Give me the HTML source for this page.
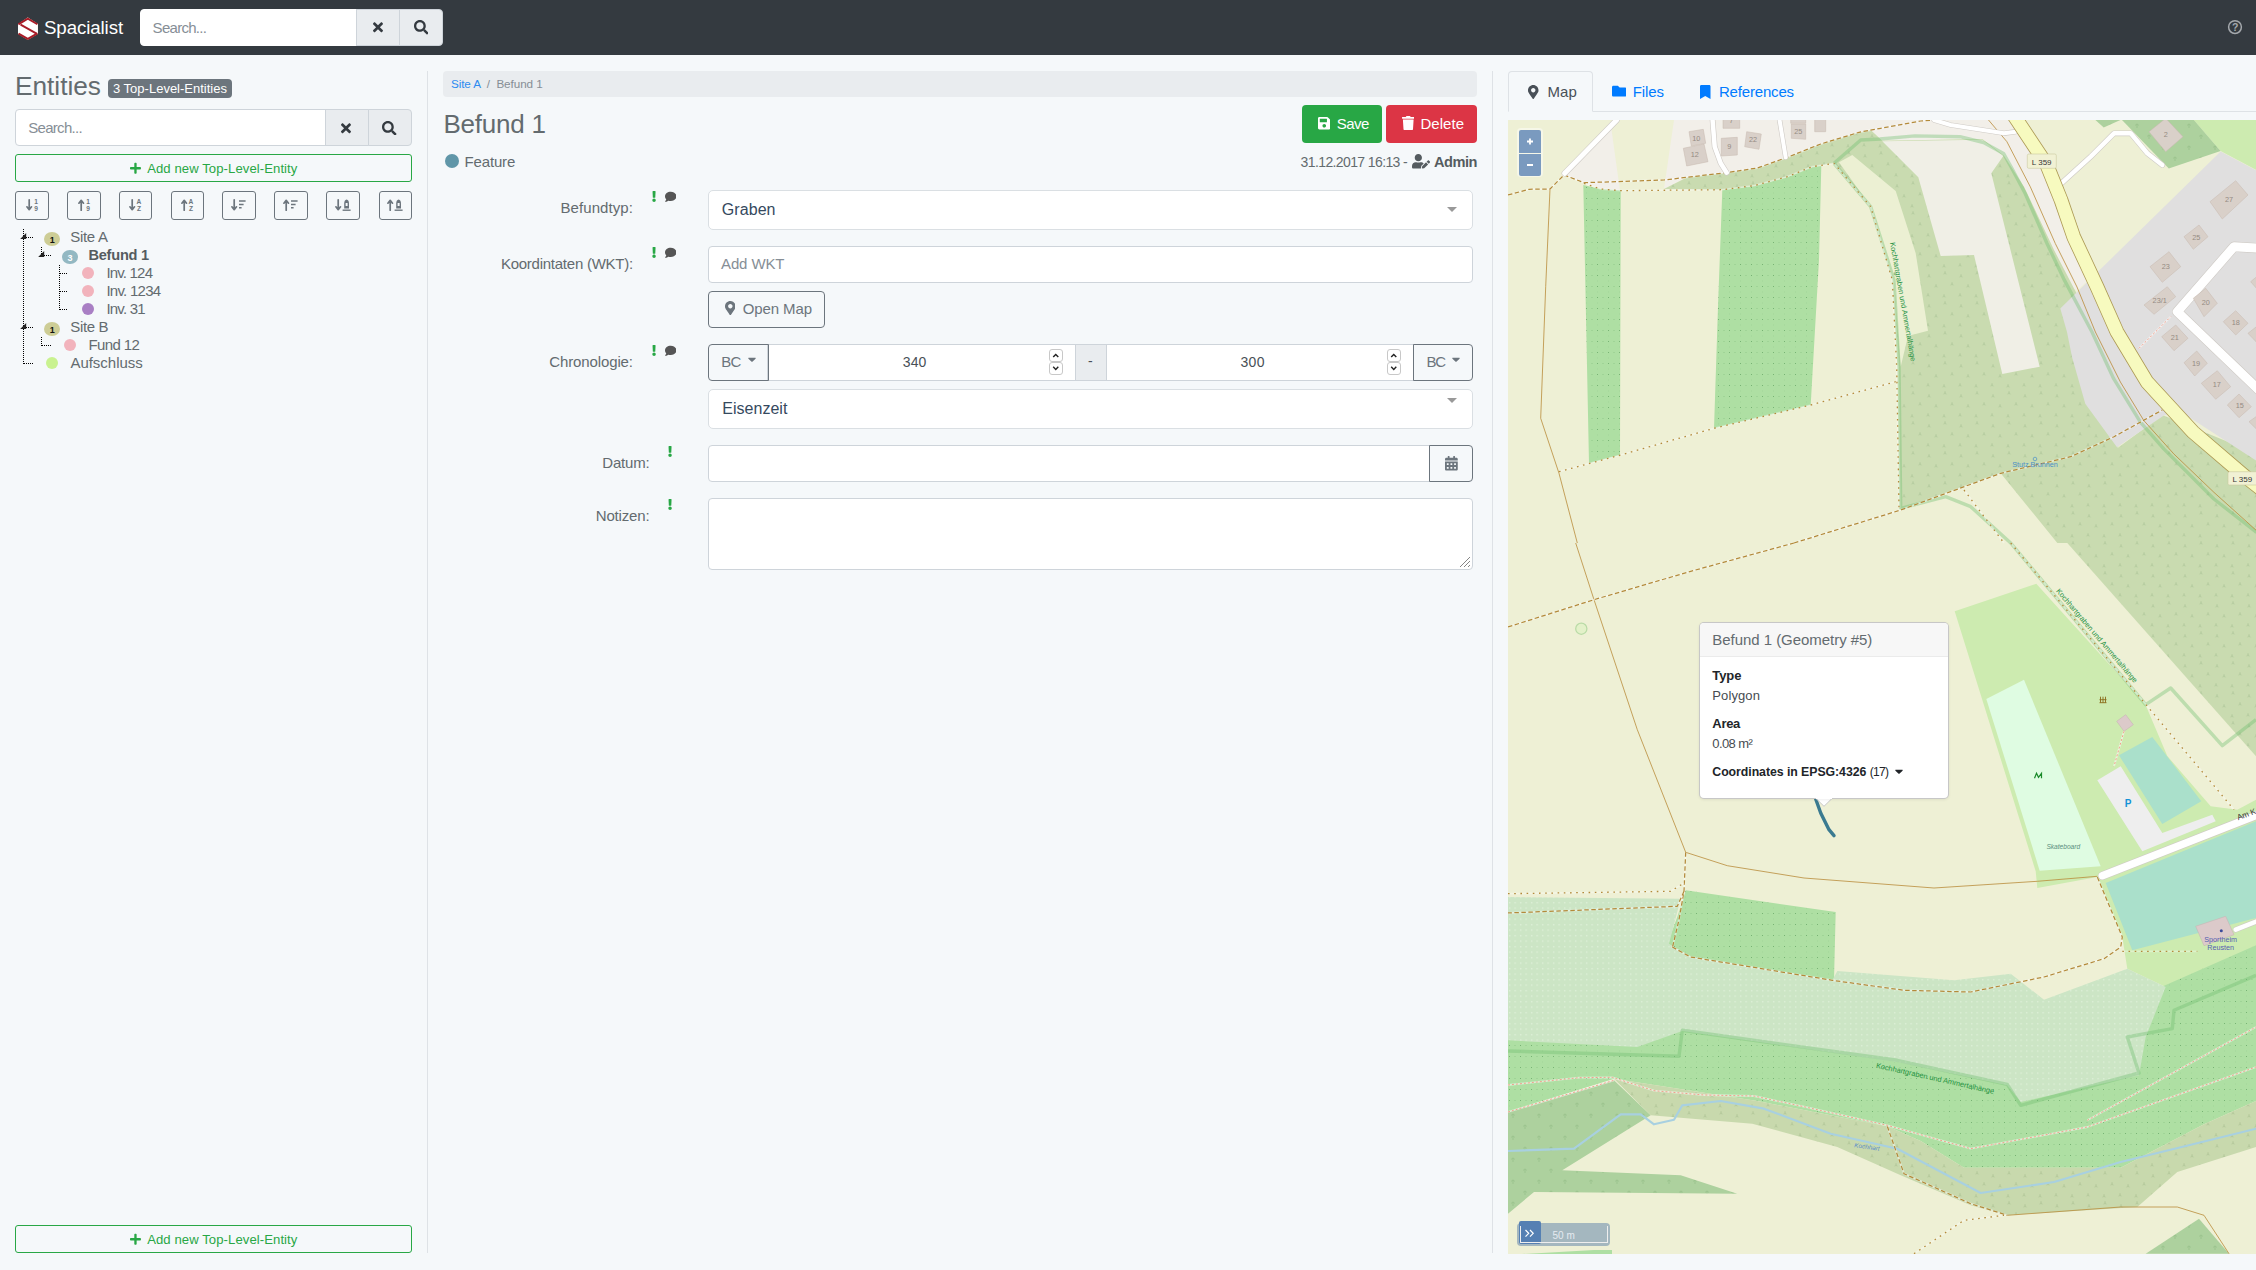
<!DOCTYPE html>
<html lang="en">
<head>
<meta charset="utf-8">
<title>Spacialist</title>
<style>
*{box-sizing:border-box;margin:0;padding:0}
html,body{width:2256px;height:1270px;overflow:hidden}
body{background:#f5f8fa;color:#636b6f;font-family:"Liberation Sans",sans-serif;font-size:15px;position:relative}
.a{position:absolute;white-space:nowrap}
.nav{left:0;top:0;width:2256px;height:55px;background:#343a40}
.inp{background:#fff;border:1px solid #ced4da}
.btng{background:#e9ecef;border:1px solid #ced4da}
.ph{color:#868e96}
.c{display:flex;align-items:center;justify-content:center}
.r{text-align:right}
.ob{border:1px solid #6c757d;border-radius:4px;color:#6c757d}
svg{display:block}
.lbl{font-size:15px;color:#636b6f}
</style>
</head>
<body>
<!-- NAVBAR -->
<div class="a nav"></div>
<svg class="a" style="left:17px;top:17px" width="22" height="24" viewBox="0 0 22 24"><polygon points="10.8,0.6 20.9,7 20.9,17 10.8,23 1,17 1,7.2" fill="#d9b38c"/><polygon points="10.8,0.6 20.9,7 20.9,16.2 10.8,22 1,16.2 1,7.2" fill="#fff"/><path d="M1.4,7.4 L10.8,1.6 L20.4,7.2 M3.6,7.6 L19.6,16.6 M20.4,16.4 L10.8,21.8 L1.6,16.6" fill="none" stroke="#a81c28" stroke-width="1.9" stroke-linejoin="round"/></svg>
<span class="a" style="left:44px;top:19px;font-size:18.7px;line-height:1;color:#fff;letter-spacing:-0.098px;">Spacialist</span>
<div class="a inp" style="left:140px;top:9px;width:217px;height:37px;border-radius:4px 0 0 4px;border-color:#fff"></div>
<span class="a" style="left:152.6px;top:20px;font-size:15px;line-height:1;color:#868e96;letter-spacing:-0.715px;">Search...</span>
<div class="a btng" style="left:356px;top:9px;width:44px;height:37px"></div>
<div class="a btng" style="left:399px;top:9px;width:44px;height:37px;border-radius:0 4px 4px 0"></div>
<svg class="a" style="left:373px;top:20px" width="9.97" height="14.5" viewBox="0 0 352 512"><path fill="#343a40" d="M242.72 256l100.07-100.07c12.28-12.28 12.28-32.19 0-44.48l-22.24-22.24c-12.28-12.28-32.19-12.28-44.48 0L176 189.28 75.93 89.21c-12.28-12.28-32.19-12.28-44.48 0L9.21 111.45c-12.28 12.28-12.28 32.19 0 44.48L109.28 256 9.21 356.07c-12.28 12.28-12.28 32.19 0 44.48l22.24 22.24c12.28 12.28 32.2 12.28 44.48 0L176 322.72l100.07 100.07c12.28 12.28 32.2 12.28 44.48 0l22.24-22.24c12.28-12.28 12.28-32.19 0-44.48L242.72 256z"/></svg>
<svg class="a" style="left:413.5px;top:20px" width="14.50" height="14.5" viewBox="0 0 512 512"><path fill="#343a40" d="M505 442.7L405.3 343c-4.5-4.5-10.6-7-17-7H372c27.6-35.3 44-79.7 44-128C416 93.1 322.9 0 208 0S0 93.1 0 208s93.1 208 208 208c48.3 0 92.7-16.4 128-44v16.3c0 6.4 2.5 12.5 7 17l99.7 99.7c9.4 9.4 24.6 9.4 33.9 0l28.3-28.3c9.4-9.4 9.4-24.6.1-34zM208 336c-70.7 0-128-57.2-128-128 0-70.7 57.2-128 128-128 70.7 0 128 57.2 128 128 0 70.7-57.2 128-128 128z"/></svg>
<svg class="a" style="left:2227px;top:19px" width="16" height="16" viewBox="0 0 16 16"><circle cx="8" cy="8.1" r="6.4" fill="none" stroke="#a5a9ad" stroke-width="1.500"/></svg>
<span class="a" style="left:2231.9px;top:22px;font-size:10.5px;line-height:1;font-weight:700;color:#a5a9ad;">?</span>


<!-- LEFT -->
<span class="a" style="left:15px;top:73px;font-size:26.25px;line-height:1;color:#636b6f;letter-spacing:-0.012px;">Entities</span>
<div class="a" style="left:108px;top:79px;width:124px;height:19px;border-radius:4px;background:#6c757d"></div>
<span class="a" style="left:113px;top:82px;font-size:13px;line-height:1;color:#fff;letter-spacing:0.003px;">3 Top-Level-Entities</span>
<div class="a inp" style="left:15px;top:109px;width:311px;height:37px;border-radius:4px 0 0 4px"></div>
<span class="a" style="left:28.2px;top:120px;font-size:15px;line-height:1;color:#868e96;letter-spacing:-0.692px;">Search...</span>
<div class="a btng" style="left:325px;top:109px;width:44px;height:37px"></div>
<div class="a btng" style="left:368px;top:109px;width:43.5px;height:37px;border-radius:0 4px 4px 0"></div>
<svg class="a" style="left:341px;top:120.5px" width="9.97" height="14.5" viewBox="0 0 352 512"><path fill="#343a40" d="M242.72 256l100.07-100.07c12.28-12.28 12.28-32.19 0-44.48l-22.24-22.24c-12.28-12.28-32.19-12.28-44.48 0L176 189.28 75.93 89.21c-12.28-12.28-32.19-12.28-44.48 0L9.21 111.45c-12.28 12.28-12.28 32.19 0 44.48L109.28 256 9.21 356.07c-12.28 12.28-12.28 32.19 0 44.48l22.24 22.24c12.28 12.28 32.2 12.28 44.48 0L176 322.72l100.07 100.07c12.28 12.28 32.2 12.28 44.48 0l22.24-22.24c12.28-12.28 12.28-32.19 0-44.48L242.72 256z"/></svg>
<svg class="a" style="left:382px;top:120.5px" width="14.50" height="14.5" viewBox="0 0 512 512"><path fill="#343a40" d="M505 442.7L405.3 343c-4.5-4.5-10.6-7-17-7H372c27.6-35.3 44-79.7 44-128C416 93.1 322.9 0 208 0S0 93.1 0 208s93.1 208 208 208c48.3 0 92.7-16.4 128-44v16.3c0 6.4 2.5 12.5 7 17l99.7 99.7c9.4 9.4 24.6 9.4 33.9 0l28.3-28.3c9.4-9.4 9.4-24.6.1-34zM208 336c-70.7 0-128-57.2-128-128 0-70.7 57.2-128 128-128 70.7 0 128 57.2 128 128 0 70.7-57.2 128-128 128z"/></svg>
<div class="a" style="left:15px;top:154px;width:397px;height:28px;border:1px solid #28a745;border-radius:3px"></div>
<svg class="a" style="left:130px;top:162px" width="10.94" height="12.5" viewBox="0 0 448 512"><path fill="#28a745" d="M416 208H272V64c0-17.67-14.33-32-32-32h-32c-17.67 0-32 14.33-32 32v144H32c-17.67 0-32 14.33-32 32v32c0 17.67 14.33 32 32 32h144v144c0 17.67 14.33 32 32 32h32c17.67 0 32-14.33 32-32V304h144c17.67 0 32-14.33 32-32v-32c0-17.67-14.33-32-32-32z"/></svg>
<span class="a" style="left:147.2px;top:162px;font-size:13.1px;line-height:1;color:#28a745;letter-spacing:0.085px;">Add new Top-Level-Entity</span>
<div class="a" style="left:15px;top:1225px;width:397px;height:28px;border:1px solid #28a745;border-radius:3px"></div>
<svg class="a" style="left:130px;top:1233px" width="10.94" height="12.5" viewBox="0 0 448 512"><path fill="#28a745" d="M416 208H272V64c0-17.67-14.33-32-32-32h-32c-17.67 0-32 14.33-32 32v144H32c-17.67 0-32 14.33-32 32v32c0 17.67 14.33 32 32 32h144v144c0 17.67 14.33 32 32 32h32c17.67 0 32-14.33 32-32V304h144c17.67 0 32-14.33 32-32v-32c0-17.67-14.33-32-32-32z"/></svg>
<span class="a" style="left:147.2px;top:1233px;font-size:13.1px;line-height:1;color:#28a745;letter-spacing:0.085px;">Add new Top-Level-Entity</span>
<div class="a" style="left:427px;top:71px;width:1px;height:1182px;background:#dee2e6"></div>
<div class="a" style="left:15.2px;top:191px;width:33.6px;height:29px;border:1px solid #6c757d;border-radius:3px"></div>
<svg class="a" style="left:25.7px;top:199.4px;overflow:visible" width="16" height="12" viewBox="0 0 16 12"><path d="M3.2,0.8V10.4M0.9,7.8L3.2,10.6L5.5,7.8" fill="none" stroke="#6c757d" stroke-width="1.7" stroke-linecap="round" stroke-linejoin="round"/><text x="10" y="5.4" font-family="Liberation Sans,sans-serif" font-size="6.6" font-weight="700" fill="#6c757d" text-anchor="middle">1</text><text x="10" y="11.6" font-family="Liberation Sans,sans-serif" font-size="6.6" font-weight="700" fill="#6c757d" text-anchor="middle">9</text></svg>
<div class="a" style="left:67.3px;top:191px;width:33.6px;height:29px;border:1px solid #6c757d;border-radius:3px"></div>
<svg class="a" style="left:77.8px;top:199.4px;overflow:visible" width="16" height="12" viewBox="0 0 16 12"><path d="M3.2,11.2V1.6M0.9,4.2L3.2,1.4L5.5,4.2" fill="none" stroke="#6c757d" stroke-width="1.7" stroke-linecap="round" stroke-linejoin="round"/><text x="10" y="5.4" font-family="Liberation Sans,sans-serif" font-size="6.6" font-weight="700" fill="#6c757d" text-anchor="middle">1</text><text x="10" y="11.6" font-family="Liberation Sans,sans-serif" font-size="6.6" font-weight="700" fill="#6c757d" text-anchor="middle">9</text></svg>
<div class="a" style="left:119.1px;top:191px;width:32.9px;height:29px;border:1px solid #6c757d;border-radius:3px"></div>
<svg class="a" style="left:129.2px;top:199.4px;overflow:visible" width="16" height="12" viewBox="0 0 16 12"><path d="M3.2,0.8V10.4M0.9,7.8L3.2,10.6L5.5,7.8" fill="none" stroke="#6c757d" stroke-width="1.7" stroke-linecap="round" stroke-linejoin="round"/><text x="10" y="5.4" font-family="Liberation Sans,sans-serif" font-size="6.6" font-weight="700" fill="#6c757d" text-anchor="middle">A</text><text x="10" y="11.6" font-family="Liberation Sans,sans-serif" font-size="6.6" font-weight="700" fill="#6c757d" text-anchor="middle">Z</text></svg>
<div class="a" style="left:171.3px;top:191px;width:32.7px;height:29px;border:1px solid #6c757d;border-radius:3px"></div>
<svg class="a" style="left:181.3px;top:199.4px;overflow:visible" width="16" height="12" viewBox="0 0 16 12"><path d="M3.2,11.2V1.6M0.9,4.2L3.2,1.4L5.5,4.2" fill="none" stroke="#6c757d" stroke-width="1.7" stroke-linecap="round" stroke-linejoin="round"/><text x="10" y="5.4" font-family="Liberation Sans,sans-serif" font-size="6.6" font-weight="700" fill="#6c757d" text-anchor="middle">A</text><text x="10" y="11.6" font-family="Liberation Sans,sans-serif" font-size="6.6" font-weight="700" fill="#6c757d" text-anchor="middle">Z</text></svg>
<div class="a" style="left:222.2px;top:191px;width:33.6px;height:29px;border:1px solid #6c757d;border-radius:3px"></div>
<svg class="a" style="left:231.4px;top:199.4px;overflow:visible" width="16" height="12" viewBox="0 0 16 12"><path d="M3.2,0.8V10.4M0.9,7.8L3.2,10.6L5.5,7.8" fill="none" stroke="#6c757d" stroke-width="1.7" stroke-linecap="round" stroke-linejoin="round"/><path d="M8,2H14.6M8,5.4H12.6M8,8.8H10.6" stroke="#6c757d" stroke-width="1.5" fill="none"/></svg>
<div class="a" style="left:274.2px;top:191px;width:33.6px;height:29px;border:1px solid #6c757d;border-radius:3px"></div>
<svg class="a" style="left:283.4px;top:199.4px;overflow:visible" width="16" height="12" viewBox="0 0 16 12"><path d="M3.2,11.2V1.6M0.9,4.2L3.2,1.4L5.5,4.2" fill="none" stroke="#6c757d" stroke-width="1.7" stroke-linecap="round" stroke-linejoin="round"/><path d="M8,2H14.6M8,5.4H12.6M8,8.8H10.6" stroke="#6c757d" stroke-width="1.5" fill="none"/></svg>
<div class="a" style="left:326.4px;top:191px;width:33.6px;height:29px;border:1px solid #6c757d;border-radius:3px"></div>
<svg class="a" style="left:335.2px;top:199.4px;overflow:visible" width="16" height="12" viewBox="0 0 16 12"><path d="M3.2,0.8V10.4M0.9,7.8L3.2,10.6L5.5,7.8" fill="none" stroke="#6c757d" stroke-width="1.7" stroke-linecap="round" stroke-linejoin="round"/><path d="M9.2,9.4V4.6Q9.2,1 11.6,0.6Q14,1 14,4.600V9.4Z" fill="#6c757d"/><path d="M7.6,11.2H15.6" stroke="#6c757d" stroke-width="1.4"/><rect x="10.6" y="4" width="2" height="3" fill="#f5f8fa"/></svg>
<div class="a" style="left:378.5px;top:191px;width:33.5px;height:29px;border:1px solid #6c757d;border-radius:3px"></div>
<svg class="a" style="left:387.2px;top:199.4px;overflow:visible" width="16" height="12" viewBox="0 0 16 12"><path d="M3.2,11.2V1.6M0.9,4.2L3.2,1.4L5.5,4.2" fill="none" stroke="#6c757d" stroke-width="1.7" stroke-linecap="round" stroke-linejoin="round"/><path d="M9.2,9.4V4.6Q9.2,1 11.6,0.6Q14,1 14,4.600V9.4Z" fill="#6c757d"/><path d="M7.6,11.2H15.6" stroke="#6c757d" stroke-width="1.4"/><rect x="10.6" y="4" width="2" height="3" fill="#f5f8fa"/></svg>
<svg class="a" style="left:0;top:0" width="130" height="380" shape-rendering="crispEdges"><path d="M23.5,229V363.5M23.5,237.5H32.5M23.5,327.5H32.5M23.5,363.5H32.5M41.5,247V255.5M41.5,255.5H50.5M59.5,265V309.5M59.5,273.5H68M59.5,291.5H68M59.5,309.5H68M41.5,337V345.5M41.5,345.5H50.5" stroke="#000" stroke-width="1" stroke-dasharray="1 1" fill="none"/></svg>
<svg class="a" style="left:0;top:0" width="130" height="380"><polygon points="26.2,233.0 26.2,239.0 20.2,239.0" fill="#222"/><polygon points="44.2,251.0 44.2,257.0 38.2,257.0" fill="#222"/><polygon points="26.2,323.0 26.2,329.0 20.2,329.0" fill="#222"/></svg>
<div class="a" style="left:44px;top:231.60000000000002px;width:16px;height:14.4px;border-radius:50%;background:#cdcd96"></div>
<span class="a" style="left:49.8px;top:236px;font-size:9px;line-height:1;font-weight:700;color:#111;">1</span>
<div class="a" style="left:62px;top:249.60000000000002px;width:16px;height:14.4px;border-radius:50%;background:#93b8c2"></div>
<span class="a" style="left:67.6px;top:254px;font-size:9px;line-height:1;font-weight:700;color:#fff;">3</span>
<div class="a" style="left:82.2px;top:267.4px;width:12.2px;height:12px;border-radius:50%;background:#f2b3bc"></div>
<div class="a" style="left:82.2px;top:285.4px;width:12.2px;height:12px;border-radius:50%;background:#f2b3bc"></div>
<div class="a" style="left:82.2px;top:303.3px;width:12.2px;height:12px;border-radius:50%;background:#a97fc4"></div>
<div class="a" style="left:44px;top:321.6px;width:16px;height:14.4px;border-radius:50%;background:#cdcd96"></div>
<span class="a" style="left:49.8px;top:326px;font-size:9px;line-height:1;font-weight:700;color:#111;">1</span>
<div class="a" style="left:64.30000000000001px;top:339.3px;width:12.2px;height:12px;border-radius:50%;background:#f2b3bc"></div>
<div class="a" style="left:46.1px;top:357.2px;width:12.2px;height:12px;border-radius:50%;background:#c9f28f"></div>
<span class="a" style="left:70.3px;top:229px;font-size:15px;line-height:1;color:#636b6f;letter-spacing:-0.317px;">Site A</span>
<span class="a" style="left:88.4px;top:248px;font-size:14.6px;line-height:1;font-weight:700;color:#555c60;letter-spacing:-0.230px;">Befund 1</span>
<span class="a" style="left:106.4px;top:265px;font-size:15px;line-height:1;color:#636b6f;letter-spacing:-0.808px;">Inv. 124</span>
<span class="a" style="left:106.4px;top:283px;font-size:15px;line-height:1;color:#636b6f;letter-spacing:-0.734px;">Inv. 1234</span>
<span class="a" style="left:106.4px;top:301px;font-size:15px;line-height:1;color:#636b6f;letter-spacing:-0.789px;">Inv. 31</span>
<span class="a" style="left:70.3px;top:319px;font-size:15px;line-height:1;color:#636b6f;letter-spacing:-0.372px;">Site B</span>
<span class="a" style="left:88.4px;top:337px;font-size:15px;line-height:1;color:#636b6f;letter-spacing:-0.578px;">Fund 12</span>
<span class="a" style="left:70.4px;top:355px;font-size:15px;line-height:1;color:#636b6f;letter-spacing:-0.015px;">Aufschluss</span>


<!-- MIDDLE -->
<div class="a" style="left:443px;top:71px;width:1034px;height:26px;border-radius:4px;background:#e9ecef"></div>
<span class="a" style="left:451px;top:78px;font-size:11.7px;line-height:1;color:#2e8bf0;letter-spacing:-0.091px;">Site A</span>
<span class="a" style="left:486.8px;top:78px;font-size:11.7px;line-height:1;color:#868e96;">/</span>
<span class="a" style="left:496.4px;top:78px;font-size:11.7px;line-height:1;color:#868e96;letter-spacing:-0.062px;">Befund 1</span>
<span class="a" style="left:443.5px;top:111px;font-size:26px;line-height:1;color:#636b6f;letter-spacing:-0.224px;">Befund 1</span>
<div class="a" style="left:445px;top:154.3px;width:14px;height:14px;border-radius:50%;background:#6096a8"></div>
<span class="a" style="left:464.6px;top:154px;font-size:15px;line-height:1;color:#636b6f;letter-spacing:-0.172px;">Feature</span>
<div class="a" style="left:1302px;top:105px;width:80px;height:38px;border-radius:4px;background:#28a745"></div>
<svg class="a" style="left:1317.7px;top:116.2px" width="12.51" height="14.3" viewBox="0 0 448 512"><path fill="#fff" d="M433.941 129.941l-83.882-83.882A48 48 0 0 0 316.118 32H48C21.49 32 0 53.49 0 80v352c0 26.51 21.49 48 48 48h352c26.51 0 48-21.49 48-48V163.882a48 48 0 0 0-14.059-33.941zM224 416c-35.346 0-64-28.654-64-64 0-35.346 28.654-64 64-64s64 28.654 64 64c0 35.346-28.654 64-64 64zm96-304.52V212c0 6.627-5.373 12-12 12H76c-6.627 0-12-5.373-12-12V108c0-6.627 5.373-12 12-12h228.52c3.183 0 6.235 1.264 8.485 3.515l3.48 3.48A11.996 11.996 0 0 1 320 111.48z"/></svg>
<span class="a" style="left:1336.7px;top:116px;font-size:15px;line-height:1;color:#fff;letter-spacing:-0.526px;">Save</span>
<div class="a" style="left:1386px;top:105px;width:91px;height:38px;border-radius:4px;background:#dc3545"></div>
<svg class="a" style="left:1401.6px;top:116.2px" width="12.51" height="14.3" viewBox="0 0 448 512"><path fill="#fff" d="M432 32H312l-9.4-18.7A24 24 0 0 0 281.1 0H166.8a23.72 23.72 0 0 0-21.4 13.3L136 32H16A16 16 0 0 0 0 48v32a16 16 0 0 0 16 16h416a16 16 0 0 0 16-16V48a16 16 0 0 0-16-16zM53.2 467a48 48 0 0 0 47.9 45h245.8a48 48 0 0 0 47.9-45L416 128H32z"/></svg>
<span class="a" style="left:1420.4px;top:116px;font-size:15px;line-height:1;color:#fff;letter-spacing:0.073px;">Delete</span>
<span class="a" style="left:1300.6px;top:155px;font-size:14px;line-height:1;color:#636b6f;letter-spacing:-0.614px;">31.12.2017 16:13 -</span>
<svg class="a" style="left:1412px;top:154.2px" width="18.12" height="14.5" viewBox="0 0 640 512"><path fill="#555c60" d="M224 256c70.700 0 128-57.300 128-128S294.700 0 224 0 96 57.300 96 128s57.300 128 128 128zm89.600 32h-16.700c-22.200 10.200-46.900 16-72.900 16s-50.600-5.800-72.900-16h-16.700C60.200 288 0 348.200 0 422.400V464c0 26.500 21.500 48 48 48h274.900c-2.400-6.800-3.400-14-2.600-21.300l6.800-60.900 1.200-11.100 7.900-7.900 77.300-77.300c-24.500-27.700-60-45.500-99.900-45.500zm45.300 145.300l-6.800 61c-1.100 10.200 7.500 18.800 17.600 17.600l60.900-6.800 137.900-137.900-71.700-71.700-137.900 137.800zM633 268.900L595.100 231c-9.300-9.300-24.500-9.300-33.800 0l-37.800 37.800-4.100 4.100 71.800 71.700 41.800-41.800c9.300-9.400 9.300-24.500 0-33.900z"/></svg>
<span class="a" style="left:1433.9px;top:155px;font-size:14.6px;line-height:1;font-weight:700;color:#555c60;letter-spacing:-0.461px;">Admin</span>
<div class="a" style="left:1492px;top:71px;width:1px;height:1182px;background:#dee2e6"></div>

<span class="a" style="left:560.5px;top:200px;font-size:15px;line-height:1;color:#636b6f;letter-spacing:0.068px;">Befundtyp:</span>
<svg class="a" style="left:652.4px;top:190.7px" width="4.12" height="11" viewBox="0 0 192 512"><path fill="#28a745" d="M176 432c0 44.112-35.888 80-80 80s-80-35.888-80-80 35.888-80 80-80 80 35.888 80 80zM25.26 25.199l13.6 272C39.499 309.972 50.041 320 62.83 320h66.34c12.789 0 23.331-10.028 23.97-22.801l13.6-272C167.425 11.49 156.496 0 142.77 0H49.23C35.504 0 24.575 11.49 25.26 25.199z"/></svg>
<svg class="a" style="left:664.9px;top:190.5px" width="11.50" height="11.5" viewBox="0 0 512 512"><path fill="#555" d="M256 32C114.6 32 0 125.1 0 240c0 49.6 21.4 95 57 130.7C44.5 421.1 2.7 466 2.2 466.5c-2.2 2.3-2.8 5.7-1.5 8.7S4.8 480 8 480c66.3 0 116-31.8 140.6-51.4 32.7 12.3 69 19.4 107.4 19.4 141.4 0 256-93.1 256-208S397.4 32 256 32z"/></svg>
<div class="a" style="left:708px;top:190px;width:765px;height:39.5px;border:1px solid #dadfe3;border-radius:5px;background:#fff"></div>
<span class="a" style="left:721.8px;top:202px;font-size:16px;line-height:1;color:#35495e;letter-spacing:0.071px;">Graben</span>
<svg class="a" style="left:1447.2px;top:207.2px" width="10" height="5" viewBox="0 0 10 5"><polygon points="0,0 10,0 5,5" fill="#999"/></svg>

<span class="a" style="left:500.9px;top:256px;font-size:15px;line-height:1;color:#636b6f;letter-spacing:-0.248px;">Koordintaten (WKT):</span>
<svg class="a" style="left:652.4px;top:246.8px" width="4.12" height="11" viewBox="0 0 192 512"><path fill="#28a745" d="M176 432c0 44.112-35.888 80-80 80s-80-35.888-80-80 35.888-80 80-80 80 35.888 80 80zM25.26 25.199l13.6 272C39.499 309.972 50.041 320 62.83 320h66.34c12.789 0 23.331-10.028 23.97-22.801l13.6-272C167.425 11.49 156.496 0 142.77 0H49.23C35.504 0 24.575 11.49 25.26 25.199z"/></svg>
<svg class="a" style="left:664.9px;top:246.6px" width="11.50" height="11.5" viewBox="0 0 512 512"><path fill="#555" d="M256 32C114.6 32 0 125.1 0 240c0 49.6 21.4 95 57 130.7C44.5 421.1 2.7 466 2.2 466.5c-2.2 2.3-2.8 5.7-1.5 8.7S4.8 480 8 480c66.3 0 116-31.8 140.6-51.4 32.7 12.3 69 19.4 107.4 19.4 141.4 0 256-93.1 256-208S397.4 32 256 32z"/></svg>
<div class="a inp" style="left:708px;top:246px;width:765px;height:37px;border-radius:4px"></div>
<span class="a" style="left:721px;top:256px;font-size:15px;line-height:1;color:#868e96;letter-spacing:-0.113px;">Add WKT</span>
<div class="a ob" style="left:708px;top:291px;width:117px;height:37px"></div>
<svg class="a" style="left:724.6px;top:301px" width="10.65" height="14.2" viewBox="0 0 384 512"><path fill="#6c757d" d="M172.268 501.67C26.97 291.031 0 269.413 0 192 0 85.961 85.961 0 192 0s192 85.961 192 192c0 77.413-26.97 99.031-172.268 309.67-9.535 13.774-29.93 13.773-39.464 0zM192 272c44.183 0 80-35.817 80-80s-35.817-80-80-80-80 35.817-80 80 35.817 80 80 80z"/></svg>
<span class="a" style="left:742.8px;top:301px;font-size:15px;line-height:1;color:#6c757d;letter-spacing:-0.118px;">Open Map</span>

<span class="a" style="left:549.2px;top:354px;font-size:15px;line-height:1;color:#636b6f;letter-spacing:-0.114px;">Chronologie:</span>
<svg class="a" style="left:652.4px;top:345.3px" width="4.12" height="11" viewBox="0 0 192 512"><path fill="#28a745" d="M176 432c0 44.112-35.888 80-80 80s-80-35.888-80-80 35.888-80 80-80 80 35.888 80 80zM25.26 25.199l13.6 272C39.499 309.972 50.041 320 62.83 320h66.34c12.789 0 23.331-10.028 23.97-22.801l13.6-272C167.425 11.49 156.496 0 142.77 0H49.23C35.504 0 24.575 11.49 25.26 25.199z"/></svg>
<svg class="a" style="left:664.9px;top:345.1px" width="11.50" height="11.5" viewBox="0 0 512 512"><path fill="#555" d="M256 32C114.6 32 0 125.1 0 240c0 49.6 21.4 95 57 130.7C44.5 421.1 2.7 466 2.2 466.5c-2.2 2.3-2.8 5.7-1.5 8.7S4.8 480 8 480c66.3 0 116-31.8 140.6-51.4 32.7 12.3 69 19.4 107.4 19.4 141.4 0 256-93.1 256-208S397.4 32 256 32z"/></svg>
<div class="a inp" style="left:767px;top:344px;width:309px;height:37px"></div>
<div class="a btng" style="left:1075px;top:344px;width:32px;height:37px"></div>
<div class="a inp" style="left:1106px;top:344px;width:308px;height:37px"></div>
<div class="a ob" style="left:708px;top:344px;width:60.500px;height:37px;border-radius:4px 0 0 4px"></div>
<div class="a ob" style="left:1413px;top:344px;width:60px;height:37px;border-radius:0 4px 4px 0"></div>
<span class="a" style="left:721.3px;top:354px;font-size:15px;line-height:1;color:#6c757d;letter-spacing:-0.822px;">BC</span>
<svg class="a" style="left:748px;top:353.4px" width="8.00" height="12.8" viewBox="0 0 320 512"><path fill="#6c757d" d="M31.3 192h257.3c17.8 0 26.7 21.5 14.1 34.1L174.1 354.8c-7.8 7.8-20.5 7.8-28.3 0L17.2 226.1C4.6 213.5 13.5 192 31.3 192z"/></svg>
<span class="a" style="left:1426.4px;top:354px;font-size:15px;line-height:1;color:#6c757d;letter-spacing:-1.022px;">BC</span>
<svg class="a" style="left:1452.2px;top:353.4px" width="8.00" height="12.8" viewBox="0 0 320 512"><path fill="#6c757d" d="M31.3 192h257.3c17.8 0 26.7 21.5 14.1 34.1L174.1 354.8c-7.8 7.8-20.5 7.8-28.3 0L17.2 226.1C4.6 213.5 13.5 192 31.3 192z"/></svg>
<span class="a" style="left:902.8px;top:355px;font-size:14px;line-height:1;color:#495057;letter-spacing:0.080px;">340</span>
<span class="a" style="left:1240.5px;top:355px;font-size:14px;line-height:1;color:#495057;letter-spacing:0.314px;">300</span>
<span class="a" style="left:1088px;top:354px;font-size:14px;line-height:1;color:#495057;">-</span>
<div class="a" style="left:1049.2px;top:349px;width:13.5px;height:12.700px;border:1px solid #c8c8c8;border-radius:3px;background:#fff"></div>
<svg class="a" style="left:1049.2px;top:349px" width="13.5" height="12.7"><path d="M4.2,8L6.75,5.4L9.3,8" fill="none" stroke="#222" stroke-width="1.4"/></svg>
<div class="a" style="left:1049.2px;top:362.3px;width:13.5px;height:12.700px;border:1px solid #c8c8c8;border-radius:3px;background:#fff"></div>
<svg class="a" style="left:1049.2px;top:362.3px" width="13.5" height="12.7"><path d="M4.2,4.8L6.75,7.4L9.3,4.800" fill="none" stroke="#222" stroke-width="1.4"/></svg>
<div class="a" style="left:1387.3px;top:349px;width:13.5px;height:12.700px;border:1px solid #c8c8c8;border-radius:3px;background:#fff"></div>
<svg class="a" style="left:1387.3px;top:349px" width="13.5" height="12.7"><path d="M4.2,8L6.75,5.4L9.3,8" fill="none" stroke="#222" stroke-width="1.4"/></svg>
<div class="a" style="left:1387.3px;top:362.3px;width:13.5px;height:12.700px;border:1px solid #c8c8c8;border-radius:3px;background:#fff"></div>
<svg class="a" style="left:1387.3px;top:362.3px" width="13.5" height="12.7"><path d="M4.2,4.8L6.75,7.4L9.3,4.800" fill="none" stroke="#222" stroke-width="1.4"/></svg>
<div class="a" style="left:708px;top:389px;width:765px;height:39.5px;border:1px solid #dadfe3;border-radius:5px;background:#fff"></div>
<span class="a" style="left:722.3px;top:401px;font-size:16px;line-height:1;color:#35495e;letter-spacing:0.020px;">Eisenzeit</span>
<svg class="a" style="left:1447.2px;top:398px" width="10" height="5" viewBox="0 0 10 5"><polygon points="0,0 10,0 5,5" fill="#999"/></svg>

<span class="a" style="left:602.3px;top:455px;font-size:15px;line-height:1;color:#636b6f;letter-spacing:-0.210px;">Datum:</span>
<svg class="a" style="left:668.4px;top:446px" width="4.12" height="11" viewBox="0 0 192 512"><path fill="#28a745" d="M176 432c0 44.112-35.888 80-80 80s-80-35.888-80-80 35.888-80 80-80 80 35.888 80 80zM25.26 25.199l13.6 272C39.499 309.972 50.041 320 62.83 320h66.34c12.789 0 23.331-10.028 23.97-22.801l13.6-272C167.425 11.49 156.496 0 142.77 0H49.23C35.504 0 24.575 11.49 25.26 25.199z"/></svg>
<div class="a inp" style="left:708px;top:445px;width:722px;height:37px;border-radius:4px 0 0 4px"></div>
<div class="a ob" style="left:1429px;top:445px;width:44px;height:37px;border-radius:0 4px 4px 0"></div>
<svg class="a" style="left:1444.9px;top:456px" width="12.78" height="14.6" viewBox="0 0 448 512"><path fill="#6c757d" d="M0 464c0 26.5 21.5 48 48 48h352c26.5 0 48-21.5 48-48V192H0v272zm320-196c0-6.6 5.4-12 12-12h40c6.6 0 12 5.4 12 12v40c0 6.6-5.4 12-12 12h-40c-6.6 0-12-5.4-12-12v-40zm0 128c0-6.6 5.4-12 12-12h40c6.6 0 12 5.4 12 12v40c0 6.6-5.4 12-12 12h-40c-6.6 0-12-5.4-12-12v-40zM192 268c0-6.6 5.4-12 12-12h40c6.6 0 12 5.4 12 12v40c0 6.6-5.4 12-12 12h-40c-6.6 0-12-5.4-12-12v-40zm0 128c0-6.6 5.4-12 12-12h40c6.6 0 12 5.4 12 12v40c0 6.6-5.4 12-12 12h-40c-6.6 0-12-5.4-12-12v-40zM64 268c0-6.6 5.4-12 12-12h40c6.6 0 12 5.4 12 12v40c0 6.6-5.4 12-12 12H76c-6.6 0-12-5.4-12-12v-40zm0 128c0-6.6 5.4-12 12-12h40c6.6 0 12 5.4 12 12v40c0 6.6-5.4 12-12 12H76c-6.6 0-12-5.4-12-12v-40zM400 64h-48V16c0-8.800-7.200-16-16-16h-32c-8.800 0-16 7.200-16 16v48H160V16c0-8.800-7.200-16-16-16h-32c-8.800 0-16 7.200-16 16v48H48C21.500 64 0 85.500 0 112v48h448v-48c0-26.500-21.500-48-48-48z"/></svg>

<span class="a" style="left:595.8px;top:508px;font-size:15px;line-height:1;color:#636b6f;letter-spacing:-0.179px;">Notizen:</span>
<svg class="a" style="left:668.4px;top:499.3px" width="4.12" height="11" viewBox="0 0 192 512"><path fill="#28a745" d="M176 432c0 44.112-35.888 80-80 80s-80-35.888-80-80 35.888-80 80-80 80 35.888 80 80zM25.26 25.199l13.6 272C39.499 309.972 50.041 320 62.83 320h66.34c12.789 0 23.331-10.028 23.97-22.801l13.6-272C167.425 11.49 156.496 0 142.77 0H49.23C35.504 0 24.575 11.49 25.26 25.199z"/></svg>
<div class="a inp" style="left:708px;top:498px;width:765px;height:72px;border-radius:4px"></div>
<svg class="a" style="left:1459px;top:556px" width="12" height="12" viewBox="0 0 12 12"><path d="M11,1L1,11M11,5L5,11M11,9L9,11" stroke="#777" stroke-width="0.9"/></svg>


<!-- RIGHT -->
<svg class="a" style="left:1508px;top:120px;overflow:hidden" width="748" height="1133.5" viewBox="0 0 748 1133.5" font-family="Liberation Sans,sans-serif"><defs>
<pattern id="vine" width="11" height="11" patternUnits="userSpaceOnUse"><rect width="11" height="11" fill="#aedfa3"/><rect x="1" y="1" width="1" height="1" fill="#77b374"/><rect x="6.5" y="1" width="1" height="1" fill="#93c98c"/><rect x="1" y="6.5" width="1" height="1" fill="#a3d699"/></pattern>
<pattern id="pale" width="5.5" height="5.5" patternUnits="userSpaceOnUse"><rect width="5.5" height="5.5" fill="#cce5c5"/><rect x="1" y="1" width="1.3" height="1.3" fill="#e0f1db"/></pattern>
<pattern id="wood" width="26" height="22" patternUnits="userSpaceOnUse"><rect width="26" height="22" fill="#add19e"/><path d="M5,8v-3M3.600,5.500a1.400,1.400 0 1,1 2.800,0M17,19v-3M15.600,16.500a1.400,1.400 0 1,1 2.800,0" stroke="#8fb882" stroke-width="0.6" fill="none"/></pattern>
<pattern id="scrub" width="32" height="30" patternUnits="userSpaceOnUse"><rect width="32" height="30" fill="#c9dbb0"/><path d="M3.4,7.4L5,5.6L6.6,7.4M5,4V7.4M19.4,4.4L21,2.6L22.6,4.4M21,1V4.4M10.4,17.4L12,15.6L13.6,17.4M12,14V17.4M26.4,15.4L28,13.6L29.6,15.4M28,12V15.4M2.4,26.4L4,24.6L5.6,26.4M4,23V26.4M18.4,27.4L20,25.6L21.6,27.4M20,24V27.4" stroke="#a9c394" stroke-width="0.55" fill="none"/></pattern>
<pattern id="scrub2" width="32" height="30" patternUnits="userSpaceOnUse"><rect width="32" height="30" fill="#c8d9ad"/><path d="M3.4,7.4L5,5.6L6.6,7.4M5,4V7.4M19.4,4.4L21,2.6L22.6,4.4M21,1V4.4M10.4,17.4L12,15.6L13.6,17.4M12,14V17.4M26.4,15.4L28,13.6L29.6,15.4M28,12V15.4M2.4,26.4L4,24.6L5.6,26.4M4,23V26.4M18.4,27.4L20,25.6L21.6,27.4M20,24V27.4" stroke="#a8bf90" stroke-width="0.55" fill="none"/></pattern>
</defs>
<rect x="0" y="0" width="748" height="1134" fill="#eef0d5"/>
<polygon points="56.0,55.0 107.7,0.0 103.3,8.3 112.0,70.7 96.0,69.3 76.0,63.3" fill="#f2efe9" />
<polygon points="166.0,0.0 156.0,69.0 179.3,57.3 221.0,52.3 249.3,48.0 279.3,37.3 312.7,24.0 351.0,12.3 374.3,20.7 474.3,19.0 496.0,35.7 516.0,66.7 546.0,130.0 562.7,166.7 596.0,186.7 607.7,200.0 516.0,0.0" fill="#f2efe9" />
<polygon points="516.0,0.0 589.3,0.0 592.7,6.7 619.3,6.7 659.3,48.3 712.7,31.7 551.0,188.3 607.7,200.0 562.7,100.0" fill="#eef0d5" />
<polygon points="685.9,0.0 712.6,30.9 748.6,50.0 748.6,0.0" fill="#cdebb0" />
<polygon points="614.0,0.0 660.8,48.4 712.6,30.9 685.9,0.0" fill="url(#wood)" />
<polygon points="587.4,0.0 595.7,7.5 612.4,0.0" fill="url(#wood)" />
<polygon points="156.0,69.0 179.3,57.3 221.0,52.3 249.3,48.0 279.3,37.3 312.7,24.0 351.0,12.3 362.7,10.0 374.3,20.7 474.3,19.0 496.0,35.7 516.0,66.7 546.0,130.0 589.3,213.3 629.3,290.0 609.3,328.3 654.3,295.0 748.0,333.3 748.0,423.0 549.3,423.0 492.7,353.3 392.7,390.0 391.0,246.7 386.0,160.0 362.7,86.7 326.0,43.3 304.3,46.7 279.3,56.7 246.0,65.7 214.3,69.7" fill="url(#scrub)" />
<polygon points="331.0,42.3 344.3,35.0 387.7,71.0 407.7,133.3 420.0,210.7 400.0,216.0 392.7,246.7 386.0,160.0 362.7,86.7" fill="#ecf0d3" />
<polygon points="374.3,21.3 474.3,19.7 495.3,36.0 483.3,53.3 531.7,246.7 494.3,254.0 466.0,135.0 432.7,136.0 410.3,57.3" fill="#f0efe6" />
<polygon points="712.6,31.5 748.6,50.5 748.6,341.0 670.8,290.5 655.8,295.5 609.0,327.2 577.3,283.8 564.0,237.0 559.0,212.0 552.3,188.6" fill="#e0dfdf" />
<polygon points="75.3,65.0 92.7,69.0 112.7,70.3 112.0,335.0 81.0,343.3" fill="url(#vine)" />
<polygon points="214.3,70.0 246.0,66.0 279.3,57.0 304.3,47.0 313.3,45.7 311.0,140.0 302.7,285.0 206.0,308.3 210.0,186.7" fill="url(#vine)" />
<polygon points="559.3,423.0 748.0,423.0 748.0,636.3" fill="url(#scrub)" />
<polygon points="446.7,491.3 528.3,463.7 637.3,584.3 659.3,636.0 702.7,686.3 729.3,689.7 748.0,679.7 748.0,827.0 657.7,867.0 619.3,848.7 614.3,817.0 589.3,757.0 529.3,768.0 527.7,751.3" fill="#cdebb0" />
<polygon points="478.3,579.0 516.0,559.7 592.7,746.3 531.7,750.7" fill="#dffce2" />
<polygon points="611.0,635.3 644.3,617.0 693.3,681.3 654.3,704.0" fill="#aae0cb" />
<polygon points="589.3,660.3 612.7,646.3 654.3,713.0 704.3,694.7 707.7,701.3 634.3,731.3" fill="#eeeeee" />
<polygon points="597.7,763.0 748.0,701.3 748.0,798.0 624.3,830.3" fill="#aae0cb" />
<polygon points="608.7,601.3 617.7,594.7 625.3,604.7 616.0,611.3" fill="#dccaca" stroke="#c4b0b0" stroke-width="0.5"/>
<polygon points="687.7,806.3 717.7,796.3 726.0,814.7 696.0,825.7" fill="#dccaca" stroke="#c4b0b0" stroke-width="0.5"/>
<polygon points="0.0,915.3 129.3,922.0 174.3,905.3 389.3,937.0 499.3,960.3 512.7,980.3 626.0,953.7 649.3,868.7 748.0,825.3 748.0,981.0 696.0,1004.3 612.7,1047.7 456.0,1047.7 412.7,1021.0 379.3,1006.3 249.3,981.0 106.0,958.7 0.0,992.0" fill="url(#vine)" />
<polygon points="177.7,770.3 327.7,792.0 326.0,860.3 182.7,837.0 159.3,823.7 169.3,797.0" fill="url(#vine)" />
<polygon points="0.0,777.0 172.7,778.7 161.0,823.7 182.7,837.0 324.3,860.3 329.3,851.0 446.0,860.3 502.7,853.7 536.0,879.7 619.3,848.7 657.7,867.0 637.7,917.0 631.0,955.3 512.7,982.0 499.3,965.3 389.3,942.0 174.3,911.0 129.3,927.0 0.0,920.3" fill="url(#pale)" />
<polygon points="0.0,992.0 106.0,960.3 142.7,995.3 54.3,1050.3 172.7,1055.3 229.3,1073.7 26.0,1072.0 0.0,1093.7" fill="url(#wood)" />
<polygon points="106.0,958.7 249.3,981.0 379.3,1006.3 412.7,1021.0 456.0,1047.7 612.7,1047.7 696.0,1004.3 748.0,981.0 748.0,1027.0 669.3,1052.0 629.3,1087.0 499.3,1095.3 462.7,1085.3 392.7,1055.3 329.3,1027.0 244.3,1003.7 142.7,995.3" fill="url(#scrub2)" />
<polygon points="637.7,1133.7 691.0,1098.7 721.0,1133.7" fill="url(#wood)" />
<polygon points="14.0,1134.0 86.0,1130.0 104.0,1130.0 104.0,1134.0" fill="#aedfa3" />
<polyline points="326.0,43.3 352.7,20.0 372.0,19.0 407.0,15.9 452.0,16.7 475.5,22.5 495.5,33.4 503.9,48.4 517.2,73.5 539.0,123.5 555.6,158.6 584.0,212.0 605.7,258.7 632.4,302.2 655.8,328.9 705.9,379.0 748.6,412.3" fill="none" stroke="rgba(110,190,110,0.38)" stroke-width="3.4" stroke-linejoin="round" stroke-linecap="butt"/>
<polyline points="326.0,43.3 362.7,86.7 386.0,160.0 391.0,246.7 392.7,388.3 437.7,376.7 462.7,386.7 502.7,423.0" fill="none" stroke="rgba(110,190,110,0.38)" stroke-width="3.4" stroke-linejoin="round" stroke-linecap="butt"/>
<polyline points="502.7,423.0 637.7,584.7 662.7,568.0 714.3,625.7 748.0,599.7" fill="none" stroke="rgba(110,190,110,0.38)" stroke-width="3.4" stroke-linejoin="round" stroke-linecap="butt"/>
<polyline points="0.0,931.0 171.0,936.3 174.3,910.3 389.3,940.3 499.3,964.3 512.7,985.3 631.0,953.0 619.3,917.0 664.3,908.7 666.0,890.3 748.0,855.3" fill="none" stroke="rgba(110,190,110,0.38)" stroke-width="3.4" stroke-linejoin="round" stroke-linecap="butt"/>
<polyline points="0.0,1031.0 66.0,1028.7 112.7,994.3 132.7,994.3 146.0,1004.3 166.0,999.7 174.3,985.3 212.7,981.0 256.0,988.7 322.7,1013.7 389.3,1028.7 472.7,1073.0 546.0,1062.0 612.7,1042.0 748.0,1008.7" fill="none" stroke="#a8d0e0" stroke-width="2.2" stroke-linejoin="round" stroke-linecap="butt"/>
<polyline points="42.0,69.0 37.7,166.7 32.7,298.3 51.0,353.3 69.3,423.0" fill="none" stroke="#b98c3a" stroke-width="0.8" stroke-linejoin="round" stroke-linecap="butt"/>
<polyline points="67.7,423.0 86.0,479.7 129.3,609.7 177.7,732.3 219.3,745.7 296.0,758.0 426.0,768.0 529.3,761.3 589.3,756.3" fill="none" stroke="#b98c3a" stroke-width="0.8" stroke-linejoin="round" stroke-linecap="butt"/>
<polyline points="480.5,0.0 498.9,21.7 522.3,66.8 547.3,123.5 569.0,167.0 587.4,212.0 612.4,262.0 635.8,300.5 665.8,333.9 705.9,372.3 748.6,410.7" fill="none" stroke="#b98c3a" stroke-width="0.8" stroke-linejoin="round" stroke-linecap="butt"/>
<polyline points="499.3,1095.3 612.7,1087.0 669.3,1087.0 696.0,1095.3 721.0,1133.7" fill="none" stroke="#b98c3a" stroke-width="0.8" stroke-linejoin="round" stroke-linecap="butt"/>
<polyline points="0.0,75.0 21.0,69.3 42.0,69.0 56.0,55.0" fill="none" stroke="#fff" stroke-width="1.9" stroke-linejoin="round" stroke-linecap="butt" opacity="0.45"/>
<polyline points="0.0,75.0 21.0,69.3 42.0,69.0 56.0,55.0" fill="none" stroke="#b38a3a" stroke-width="1.25" stroke-linejoin="round" stroke-linecap="butt" stroke-dasharray="4.5 2.5"/>
<polyline points="56.0,55.0 76.0,62.7 156.0,60.0 221.0,52.3 249.3,48.0 279.3,37.3 312.7,24.0 351.0,12.3 372.7,8.3 412.7,1.0 426.0,0.0" fill="none" stroke="#fff" stroke-width="1.9" stroke-linejoin="round" stroke-linecap="butt" opacity="0.45"/>
<polyline points="56.0,55.0 76.0,62.7 156.0,60.0 221.0,52.3 249.3,48.0 279.3,37.3 312.7,24.0 351.0,12.3 372.7,8.3 412.7,1.0 426.0,0.0" fill="none" stroke="#b38a3a" stroke-width="1.25" stroke-linejoin="round" stroke-linecap="butt" stroke-dasharray="4.5 2.5"/>
<polyline points="286.0,423.0 392.7,390.0 492.7,353.3 562.7,336.7 606.0,316.7 654.3,290.0" fill="none" stroke="#fff" stroke-width="1.9" stroke-linejoin="round" stroke-linecap="butt" opacity="0.45"/>
<polyline points="286.0,423.0 392.7,390.0 492.7,353.3 562.7,336.7 606.0,316.7 654.3,290.0" fill="none" stroke="#b38a3a" stroke-width="1.25" stroke-linejoin="round" stroke-linecap="butt" stroke-dasharray="4.5 2.5"/>
<polyline points="0.0,507.0 86.0,479.7 182.7,451.3 286.0,423.0" fill="none" stroke="#fff" stroke-width="1.9" stroke-linejoin="round" stroke-linecap="butt" opacity="0.45"/>
<polyline points="0.0,507.0 86.0,479.7 182.7,451.3 286.0,423.0" fill="none" stroke="#b38a3a" stroke-width="1.25" stroke-linejoin="round" stroke-linecap="butt" stroke-dasharray="4.5 2.5"/>
<polyline points="177.7,732.3 176.0,771.3 171.0,799.7 164.3,828.0" fill="none" stroke="#fff" stroke-width="1.9" stroke-linejoin="round" stroke-linecap="butt" opacity="0.45"/>
<polyline points="177.7,732.3 176.0,771.3 171.0,799.7 164.3,828.0" fill="none" stroke="#b38a3a" stroke-width="1.25" stroke-linejoin="round" stroke-linecap="butt" stroke-dasharray="4.5 2.5"/>
<polyline points="176.0,771.3 169.3,786.3 0.0,793.0" fill="none" stroke="#fff" stroke-width="1.9" stroke-linejoin="round" stroke-linecap="butt" opacity="0.45"/>
<polyline points="176.0,771.3 169.3,786.3 0.0,793.0" fill="none" stroke="#b38a3a" stroke-width="1.25" stroke-linejoin="round" stroke-linecap="butt" stroke-dasharray="4.5 2.5"/>
<polyline points="164.3,827.0 182.7,837.0 324.3,860.3 396.0,870.3 462.7,872.0 536.0,857.0 596.0,838.7 612.7,827.0 614.3,817.0 589.3,757.0" fill="none" stroke="#fff" stroke-width="1.9" stroke-linejoin="round" stroke-linecap="butt" opacity="0.45"/>
<polyline points="164.3,827.0 182.7,837.0 324.3,860.3 396.0,870.3 462.7,872.0 536.0,857.0 596.0,838.7 612.7,827.0 614.3,817.0 589.3,757.0" fill="none" stroke="#b38a3a" stroke-width="1.25" stroke-linejoin="round" stroke-linecap="butt" stroke-dasharray="4.5 2.5"/>
<polyline points="379.3,1006.3 396.0,1053.7 462.7,1083.7 499.3,1095.3" fill="none" stroke="#fff" stroke-width="1.9" stroke-linejoin="round" stroke-linecap="butt" opacity="0.45"/>
<polyline points="379.3,1006.3 396.0,1053.7 462.7,1083.7 499.3,1095.3" fill="none" stroke="#b38a3a" stroke-width="1.25" stroke-linejoin="round" stroke-linecap="butt" stroke-dasharray="4.5 2.5"/>
<polyline points="51.0,351.7 112.7,335.0 206.0,308.3 302.7,285.0 387.7,261.7" fill="none" stroke="#fff" stroke-width="1.8" stroke-linejoin="round" stroke-linecap="butt" opacity="0.35"/>
<polyline points="51.0,351.7 112.7,335.0 206.0,308.3 302.7,285.0 387.7,261.7" fill="none" stroke="#b38a3a" stroke-width="1.3" stroke-linejoin="round" stroke-linecap="butt" stroke-dasharray="1.600 4.6"/>
<polyline points="76.0,63.3 92.7,69.0 112.7,70.7 214.3,69.7 246.0,65.7 279.3,56.7 304.3,46.7 326.0,43.3 362.7,86.7 384.3,160.0 388.7,246.7 391.0,388.3" fill="none" stroke="#fff" stroke-width="1.8" stroke-linejoin="round" stroke-linecap="butt" opacity="0.35"/>
<polyline points="76.0,63.3 92.7,69.0 112.7,70.7 214.3,69.7 246.0,65.7 279.3,56.7 304.3,46.7 326.0,43.3 362.7,86.7 384.3,160.0 388.7,246.7 391.0,388.3" fill="none" stroke="#b38a3a" stroke-width="1.3" stroke-linejoin="round" stroke-linecap="butt" stroke-dasharray="1.600 4.6"/>
<polyline points="456.0,370.0 496.0,423.0" fill="none" stroke="#fff" stroke-width="1.8" stroke-linejoin="round" stroke-linecap="butt" opacity="0.35"/>
<polyline points="456.0,370.0 496.0,423.0" fill="none" stroke="#b38a3a" stroke-width="1.3" stroke-linejoin="round" stroke-linecap="butt" stroke-dasharray="1.600 4.6"/>
<polyline points="0.0,773.7 162.7,771.3 176.0,763.0" fill="none" stroke="#fff" stroke-width="1.8" stroke-linejoin="round" stroke-linecap="butt" opacity="0.35"/>
<polyline points="0.0,773.7 162.7,771.3 176.0,763.0" fill="none" stroke="#b38a3a" stroke-width="1.3" stroke-linejoin="round" stroke-linecap="butt" stroke-dasharray="1.600 4.6"/>
<polyline points="502.7,423.0 639.3,586.3 726.0,689.7" fill="none" stroke="#fff" stroke-width="1.8" stroke-linejoin="round" stroke-linecap="butt" opacity="0.35"/>
<polyline points="502.7,423.0 639.3,586.3 726.0,689.7" fill="none" stroke="#b38a3a" stroke-width="1.3" stroke-linejoin="round" stroke-linecap="butt" stroke-dasharray="1.600 4.6"/>
<polyline points="614.3,831.3 689.3,831.3" fill="none" stroke="#fff" stroke-width="1.8" stroke-linejoin="round" stroke-linecap="butt" opacity="0.35"/>
<polyline points="614.3,831.3 689.3,831.3" fill="none" stroke="#b38a3a" stroke-width="1.3" stroke-linejoin="round" stroke-linecap="butt" stroke-dasharray="1.600 4.6"/>
<polyline points="406.0,1133.7 456.0,1100.3 496.0,1095.3" fill="none" stroke="#fff" stroke-width="1.8" stroke-linejoin="round" stroke-linecap="butt" opacity="0.35"/>
<polyline points="406.0,1133.7 456.0,1100.3 496.0,1095.3" fill="none" stroke="#b38a3a" stroke-width="1.3" stroke-linejoin="round" stroke-linecap="butt" stroke-dasharray="1.600 4.6"/>
<polyline points="0.0,965.0 71.0,957.7 104.3,957.3 146.0,970.7 196.0,975.0 246.0,976.0 296.0,986.7 379.3,1005.3 462.7,1028.7 579.3,1007.0 748.0,947.0" fill="none" stroke="#fff" stroke-width="1.8" stroke-linejoin="round" stroke-linecap="butt" opacity="0.55"/>
<polyline points="0.0,965.0 71.0,957.7 104.3,957.3 146.0,970.7 196.0,975.0 246.0,976.0 296.0,986.7 379.3,1005.3 462.7,1028.7 579.3,1007.0 748.0,947.0" fill="none" stroke="#f2a08c" stroke-width="1" stroke-linejoin="round" stroke-linecap="butt" stroke-dasharray="2 2"/>
<polyline points="579.3,1000.3 748.0,907.0" fill="none" stroke="#fff" stroke-width="1.8" stroke-linejoin="round" stroke-linecap="butt" opacity="0.55"/>
<polyline points="579.3,1000.3 748.0,907.0" fill="none" stroke="#f2a08c" stroke-width="1" stroke-linejoin="round" stroke-linecap="butt" stroke-dasharray="2 2"/>
<polyline points="0.0,992.0 106.0,960.3" fill="none" stroke="#fff" stroke-width="1.8" stroke-linejoin="round" stroke-linecap="butt" opacity="0.55"/>
<polyline points="0.0,992.0 106.0,960.3" fill="none" stroke="#f2a08c" stroke-width="1" stroke-linejoin="round" stroke-linecap="butt" stroke-dasharray="2 2"/>
<polyline points="616.0,611.3 606.0,646.3" fill="none" stroke="#fff" stroke-width="1.8" stroke-linejoin="round" stroke-linecap="butt" opacity="0.55"/>
<polyline points="616.0,611.3 606.0,646.3" fill="none" stroke="#f2a08c" stroke-width="1" stroke-linejoin="round" stroke-linecap="butt" stroke-dasharray="2 2"/>
<polyline points="631.0,228.3 662.7,196.7" fill="none" stroke="#fff" stroke-width="1.8" stroke-linejoin="round" stroke-linecap="butt" opacity="0.55"/>
<polyline points="631.0,228.3 662.7,196.7" fill="none" stroke="#f2a08c" stroke-width="1" stroke-linejoin="round" stroke-linecap="butt" stroke-dasharray="2 2"/>
<polyline points="56.7,53.3 108.7,0.0" fill="none" stroke="#cfcbc6" stroke-width="6.2" stroke-linejoin="round" stroke-linecap="round"/>
<polyline points="204.3,-3.3 206.7,26.7 212.7,43.3 218.7,52.7" fill="none" stroke="#cfcbc6" stroke-width="5.7" stroke-linejoin="round" stroke-linecap="round"/>
<polyline points="271.0,-3.3 277.7,37.3" fill="none" stroke="#cfcbc6" stroke-width="5.2" stroke-linejoin="round" stroke-linecap="round"/>
<polyline points="426.0,0.0 442.7,5.0 496.0,13.3 507.7,11.7" fill="none" stroke="#cfcbc6" stroke-width="5.2" stroke-linejoin="round" stroke-linecap="round"/>
<polyline points="553.3,63.3 582.7,36.7 606.0,13.3 622.7,13.3 639.3,33.3 654.3,45.0" fill="none" stroke="#cfcbc6" stroke-width="5.7" stroke-linejoin="round" stroke-linecap="round"/>
<polyline points="752.7,128.3 726.0,126.7 669.3,191.7 752.7,271.7" fill="none" stroke="#cfcbc6" stroke-width="10.2" stroke-linejoin="round" stroke-linecap="round"/>
<polyline points="594.3,755.7 752.7,693.7" fill="none" stroke="#cfcbc6" stroke-width="8.7" stroke-linejoin="round" stroke-linecap="round"/>
<polyline points="727.7,809.7 752.7,799.7" fill="none" stroke="#cfcbc6" stroke-width="5.7" stroke-linejoin="round" stroke-linecap="round"/>
<polyline points="56.7,53.3 108.7,0.0" fill="none" stroke="#fff" stroke-width="5" stroke-linejoin="round" stroke-linecap="round"/>
<polyline points="204.3,-3.3 206.7,26.7 212.7,43.3 218.7,52.7" fill="none" stroke="#fff" stroke-width="4.5" stroke-linejoin="round" stroke-linecap="round"/>
<polyline points="271.0,-3.3 277.7,37.3" fill="none" stroke="#fff" stroke-width="4" stroke-linejoin="round" stroke-linecap="round"/>
<polyline points="426.0,0.0 442.7,5.0 496.0,13.3 507.7,11.7" fill="none" stroke="#fff" stroke-width="4" stroke-linejoin="round" stroke-linecap="round"/>
<polyline points="553.3,63.3 582.7,36.7 606.0,13.3 622.7,13.3 639.3,33.3 654.3,45.0" fill="none" stroke="#fff" stroke-width="4.5" stroke-linejoin="round" stroke-linecap="round"/>
<polyline points="752.7,128.3 726.0,126.7 669.3,191.7 752.7,271.7" fill="none" stroke="#fff" stroke-width="9" stroke-linejoin="round" stroke-linecap="round"/>
<polyline points="594.3,755.7 752.7,693.7" fill="none" stroke="#fff" stroke-width="7.5" stroke-linejoin="round" stroke-linecap="round"/>
<polyline points="727.7,809.7 752.7,799.7" fill="none" stroke="#fff" stroke-width="4.5" stroke-linejoin="round" stroke-linecap="round"/>
<polyline points="497.0,-18.0 508.9,0.0 538.9,45.1 553.0,80.0 565.7,116.9 589.0,166.9 609.0,212.0 639.0,262.0 685.0,312.0 736.0,355.6 770.0,382.0" fill="none" stroke="#ad9a55" stroke-width="14.6" stroke-linejoin="round"/>
<polyline points="497.0,-18.0 508.9,0.0 538.9,45.1 553.0,80.0 565.7,116.9 589.0,166.9 609.0,212.0 639.0,262.0 685.0,312.0 736.0,355.6 770.0,382.0" fill="none" stroke="#f7fabf" stroke-width="13" stroke-linejoin="round"/>
<polygon points="181.0,11.7 195.3,9.3 197.7,23.3 183.3,26.0" fill="#d9d0c9" stroke="#c6b9ae" stroke-width="0.5"/>
<polygon points="175.3,28.3 196.0,24.0 200.0,41.7 178.7,46.0" fill="#d9d0c9" stroke="#c6b9ae" stroke-width="0.5"/>
<polygon points="213.3,18.3 229.3,17.3 229.3,35.0 213.3,36.0" fill="#d9d0c9" stroke="#c6b9ae" stroke-width="0.5"/>
<polygon points="238.7,11.7 253.3,14.0 251.0,29.3 236.7,26.7" fill="#d9d0c9" stroke="#c6b9ae" stroke-width="0.5"/>
<polygon points="215.0,-1.7 231.7,-1.7 231.7,8.3 215.0,8.3" fill="#d9d0c9" stroke="#c6b9ae" stroke-width="0.5"/>
<polygon points="283.3,4.0 297.7,4.0 297.7,19.3 283.3,18.3" fill="#d9d0c9" stroke="#c6b9ae" stroke-width="0.5"/>
<polygon points="282.7,-1.7 297.7,-1.7 297.7,3.3 282.7,3.3" fill="#d9d0c9" stroke="#c6b9ae" stroke-width="0.5"/>
<polygon points="306.7,-1.7 317.7,-1.7 317.7,11.7 306.7,11.7" fill="#d9d0c9" stroke="#c6b9ae" stroke-width="0.5"/>
<polygon points="641.0,11.7 657.7,-1.7 675.0,16.7 657.7,31.7" fill="#d9d0c9" stroke="#c6b9ae" stroke-width="0.5"/>
<polygon points="702.0,81.7 727.7,60.7 740.0,75.0 714.3,99.0" fill="#d9d0c9" stroke="#c6b9ae" stroke-width="0.5"/>
<polygon points="676.0,116.7 691.0,105.0 700.0,116.7 685.3,129.3" fill="#d9d0c9" stroke="#c6b9ae" stroke-width="0.5"/>
<polygon points="642.0,146.7 661.0,131.7 672.7,146.7 654.3,162.3" fill="#d9d0c9" stroke="#c6b9ae" stroke-width="0.5"/>
<polygon points="636.0,185.0 659.3,166.7 667.7,176.7 646.0,194.3" fill="#d9d0c9" stroke="#c6b9ae" stroke-width="0.5"/>
<polygon points="685.3,178.3 697.7,168.3 709.3,183.3 696.0,196.7" fill="#d9d0c9" stroke="#c6b9ae" stroke-width="0.5"/>
<polygon points="715.3,201.7 727.7,190.7 740.0,203.3 727.7,215.0" fill="#d9d0c9" stroke="#c6b9ae" stroke-width="0.5"/>
<polygon points="653.7,216.7 667.7,205.0 680.0,218.3 666.0,230.7" fill="#d9d0c9" stroke="#c6b9ae" stroke-width="0.5"/>
<polygon points="676.0,242.7 688.7,231.0 699.3,243.3 686.7,256.0" fill="#d9d0c9" stroke="#c6b9ae" stroke-width="0.5"/>
<polygon points="693.3,263.3 709.3,250.7 722.7,266.7 707.7,279.3" fill="#d9d0c9" stroke="#c6b9ae" stroke-width="0.5"/>
<polygon points="719.3,285.0 731.0,274.0 743.3,286.7 731.0,297.7" fill="#d9d0c9" stroke="#c6b9ae" stroke-width="0.5"/>
<polygon points="742.7,161.7 752.7,153.3 752.7,173.3" fill="#d9d0c9" stroke="#c6b9ae" stroke-width="0.5"/>
<polygon points="740.0,213.3 752.7,203.3 752.7,226.7" fill="#d9d0c9" stroke="#c6b9ae" stroke-width="0.5"/>
<polygon points="741.0,301.7 752.7,293.3 752.7,313.3" fill="#d9d0c9" stroke="#c6b9ae" stroke-width="0.5"/>
<text x="188.3" y="20.7" font-size="7.3" fill="#958b83" text-anchor="middle" >10</text>
<text x="186.7" y="37.3" font-size="7.3" fill="#958b83" text-anchor="middle" >12</text>
<text x="221.3" y="29.3" font-size="7.3" fill="#958b83" text-anchor="middle" >9</text>
<text x="245.0" y="22.0" font-size="7.3" fill="#958b83" text-anchor="middle" >22</text>
<text x="290.3" y="14.0" font-size="7.3" fill="#958b83" text-anchor="middle" >25</text>
<text x="223.3" y="3.3" font-size="7.3" fill="#958b83" text-anchor="middle" >7</text>
<text x="657.7" y="16.7" font-size="7.3" fill="#958b83" text-anchor="middle" >2</text>
<text x="721.0" y="82.0" font-size="7.3" fill="#958b83" text-anchor="middle" >27</text>
<text x="688.3" y="120.0" font-size="7.3" fill="#958b83" text-anchor="middle" >25</text>
<text x="657.7" y="149.3" font-size="7.3" fill="#958b83" text-anchor="middle" >23</text>
<text x="651.7" y="183.3" font-size="7.3" fill="#958b83" text-anchor="middle" >23/1</text>
<text x="697.7" y="185.0" font-size="7.3" fill="#958b83" text-anchor="middle" >20</text>
<text x="727.7" y="205.3" font-size="7.3" fill="#958b83" text-anchor="middle" >18</text>
<text x="666.7" y="220.0" font-size="7.3" fill="#958b83" text-anchor="middle" >21</text>
<text x="688.0" y="246.0" font-size="7.3" fill="#958b83" text-anchor="middle" >19</text>
<text x="708.7" y="266.7" font-size="7.3" fill="#958b83" text-anchor="middle" >17</text>
<text x="731.7" y="288.3" font-size="7.3" fill="#958b83" text-anchor="middle" >15</text>
<rect x="519.3" y="34.0" width="29.0" height="14.3" rx="1.500" fill="#f1f1d4" stroke="#c9c9a0" stroke-width="0.6"/>
<rect x="720.0" y="351.7" width="30.0" height="13.3" rx="1.500" fill="#f1f1d4" stroke="#c9c9a0" stroke-width="0.6"/>
<text x="533.7" y="44.7" font-size="8" fill="#333" text-anchor="middle" >L 359</text>
<text x="734.3" y="362.3" font-size="8" fill="#333" text-anchor="middle" >L 359</text>
<text x="382.0" y="122.7" font-size="7.4" fill="#23913f" text-anchor="start" transform="rotate(80 382.0 122.7)" >Kochhartgraben und Ammertalhänge</text>
<text x="547.7" y="471.3" font-size="7.4" fill="#23913f" text-anchor="start" transform="rotate(49.5 547.7 471.3)" >Kochhartgraben und Ammertalhänge</text>
<text x="367.7" y="947.7" font-size="7.4" fill="#23913f" text-anchor="start" transform="rotate(12.5 367.7 947.7)" >Kochhartgraben und Ammertalhänge</text>
<text x="527.0" y="347.3" font-size="7.2" fill="#4a90c8" text-anchor="middle" >Stutz Brunnen</text>
<circle cx="527.0" cy="339.0" r="1.8" fill="none" stroke="#4a90c8" stroke-width="0.7"/>
<text x="555.3" y="728.7" font-size="6.6" fill="#5a8f80" text-anchor="middle" font-style="italic">Skateboard</text>
<text x="712.7" y="822.0" font-size="7.2" fill="#5560b0" text-anchor="middle" >Sportheim</text>
<text x="712.7" y="830.3" font-size="7.2" fill="#5560b0" text-anchor="middle" >Reusten</text>
<circle cx="713.3" cy="810.7" r="1.500" fill="#3a4a9a"/>
<text x="620.0" y="687.0" font-size="10" fill="#1592d6" text-anchor="middle" font-weight="700">P</text>
<text x="358.7" y="1029.0" font-size="6.4" fill="#5f90c8" text-anchor="middle" transform="rotate(8 358.7 1029.0)" font-style="italic">Kochhart</text>
<text x="730.3" y="700.3" font-size="8" fill="#333" text-anchor="start" transform="rotate(-21 730.3 700.3)" >Am K</text>
<path d="M591.5,582.7h7M591.5,579.7h7M592.5,576.7v6M595.0,576.7v6M597.5,576.7v6" stroke="#8a6a1a" stroke-width="0.9" fill="none"/>
<path d="M526.5,658.3l2,-5l2,4l3,-4v5" stroke="#1a8a2a" stroke-width="1.2" fill="none"/>
<circle cx="73.3" cy="508.7" r="5.6" fill="#e3f1c9" stroke="#b9dba6" stroke-width="1.3"/>
<polyline points="307.7,679.0 312.7,693.0 321.0,709.7 326.0,715.7" fill="none" stroke="#3a7a90" stroke-width="3.4" stroke-linecap="round" stroke-linejoin="round"/>
</svg>
<!-- tabs -->
<div class="a" style="left:1508px;top:111px;width:748px;height:1px;background:#dee2e6"></div>
<div class="a" style="left:1508px;top:71px;width:85px;height:41px;border:1px solid #dee2e6;border-bottom-color:#f5f8fa;border-radius:4px 4px 0 0;background:#f5f8fa"></div>
<svg class="a" style="left:1528.4px;top:85px" width="10.50" height="14" viewBox="0 0 384 512"><path fill="#495057" d="M172.268 501.67C26.97 291.031 0 269.413 0 192 0 85.961 85.961 0 192 0s192 85.961 192 192c0 77.413-26.97 99.031-172.268 309.67-9.535 13.774-29.93 13.773-39.464 0zM192 272c44.183 0 80-35.817 80-80s-35.817-80-80-80-80 35.817-80 80 35.817 80 80 80z"/></svg>
<span class="a" style="left:1547.6px;top:84px;font-size:15px;line-height:1;color:#495057;letter-spacing:0.004px;">Map</span>
<svg class="a" style="left:1611.8px;top:84px" width="14.40" height="14.4" viewBox="0 0 512 512"><path fill="#007bff" d="M464 128H272l-64-64H48C21.49 64 0 85.49 0 112v288c0 26.51 21.49 48 48 48h416c26.51 0 48-21.49 48-48V176c0-26.51-21.49-48-48-48z"/></svg>
<span class="a" style="left:1632.7px;top:84px;font-size:15px;line-height:1;color:#007bff;letter-spacing:-0.094px;">Files</span>
<svg class="a" style="left:1700px;top:85px" width="10.50" height="14" viewBox="0 0 384 512"><path fill="#007bff" d="M0 512V48C0 21.49 21.49 0 48 0h288c26.51 0 48 21.49 48 48v464L192 400 0 512z"/></svg>
<span class="a" style="left:1718.9px;top:84px;font-size:15px;line-height:1;color:#007bff;letter-spacing:-0.172px;">References</span>
<!-- zoom control -->
<div class="a" style="left:1517px;top:128px;width:26px;height:49px;border-radius:4px;background:rgba(255,255,255,.45)"></div>
<div class="a" style="left:1519px;top:130px;width:22px;height:23px;border-radius:2px 2px 0 0;background:#7a9abf"></div>
<div class="a" style="left:1519px;top:154px;width:22px;height:22px;border-radius:0 0 2px 2px;background:#7a9abf"></div>
<svg class="a" style="left:1519px;top:130px" width="22" height="46"><path d="M8,11.500h6M11,8.500v6M8,35h6" stroke="#fff" stroke-width="1.8"/></svg>
<!-- scale -->
<div class="a" style="left:1516.7px;top:1223px;width:93.5px;height:22.5px;border-radius:4px;background:rgba(90,125,170,.5)"></div>
<div class="a" style="left:1519px;top:1221px;width:22px;height:22.5px;border-radius:2px;background:#5580b3"></div>
<svg class="a" style="left:1519px;top:1222px" width="22" height="22"><path d="M6.500,8l3.200,3.300l-3.200,3.300M11,8l3.200,3.300l-3.200,3.300" stroke="#fff" stroke-width="1.200" fill="none"/></svg>
<div class="a" style="left:1520px;top:1226px;width:87.500px;height:17px;border:1px solid #eee;border-top:none"></div>
<span class="a" style="left:1552.4px;top:1231px;font-size:10px;line-height:1;color:#e4eaf0;letter-spacing:0.091px;">50 m</span>
<!-- popup -->
<svg class="a" style="left:1813px;top:797px" width="22" height="11"><polygon points="2,0.500 11,9.300 20,0.500" fill="#fff" stroke="#c8c8c8" stroke-width="1"/></svg>
<div class="a" style="left:1699px;top:622px;width:250px;height:177px;border:1px solid rgba(0,0,0,.22);border-radius:5px;background:#fff;box-shadow:0 1px 3px rgba(0,0,0,.07)"></div>
<div class="a" style="left:1700px;top:623px;width:248px;height:34px;border-bottom:1px solid #ebebeb;border-radius:4px 4px 0 0;background:#f7f7f7"></div>
<div class="a" style="left:1816px;top:796px;width:16px;height:3px;background:#fff"></div>
<span class="a" style="left:1712.3px;top:632px;font-size:15px;line-height:1;color:#636b6f;letter-spacing:-0.042px;">Befund 1 (Geometry #5)</span>
<span class="a" style="left:1712.3px;top:669px;font-size:13px;line-height:1;font-weight:700;color:#212529;letter-spacing:-0.098px;">Type</span>
<span class="a" style="left:1712.3px;top:689px;font-size:13px;line-height:1;color:#464c51;letter-spacing:0.102px;">Polygon</span>
<span class="a" style="left:1712.3px;top:717px;font-size:13px;line-height:1;font-weight:700;color:#212529;letter-spacing:-0.305px;">Area</span>
<span class="a" style="left:1712.3px;top:737px;font-size:13px;line-height:1;color:#464c51;letter-spacing:-0.583px;">0.08 m²</span>
<span class="a" style="left:1712.3px;top:766px;font-size:12.3px;line-height:1;font-weight:700;color:#212529;letter-spacing:-0.047px;">Coordinates in EPSG:4326</span>
<span class="a" style="left:1869.7px;top:766px;font-size:12px;line-height:1;color:#212529;letter-spacing:-0.686px;">(17)</span>
<svg class="a" style="left:1895px;top:764.8px" width="8.00" height="12.8" viewBox="0 0 320 512"><path fill="#212529" d="M31.3 192h257.3c17.8 0 26.7 21.5 14.1 34.1L174.1 354.8c-7.8 7.8-20.5 7.8-28.3 0L17.2 226.1C4.6 213.5 13.5 192 31.3 192z"/></svg>

</body>
</html>
